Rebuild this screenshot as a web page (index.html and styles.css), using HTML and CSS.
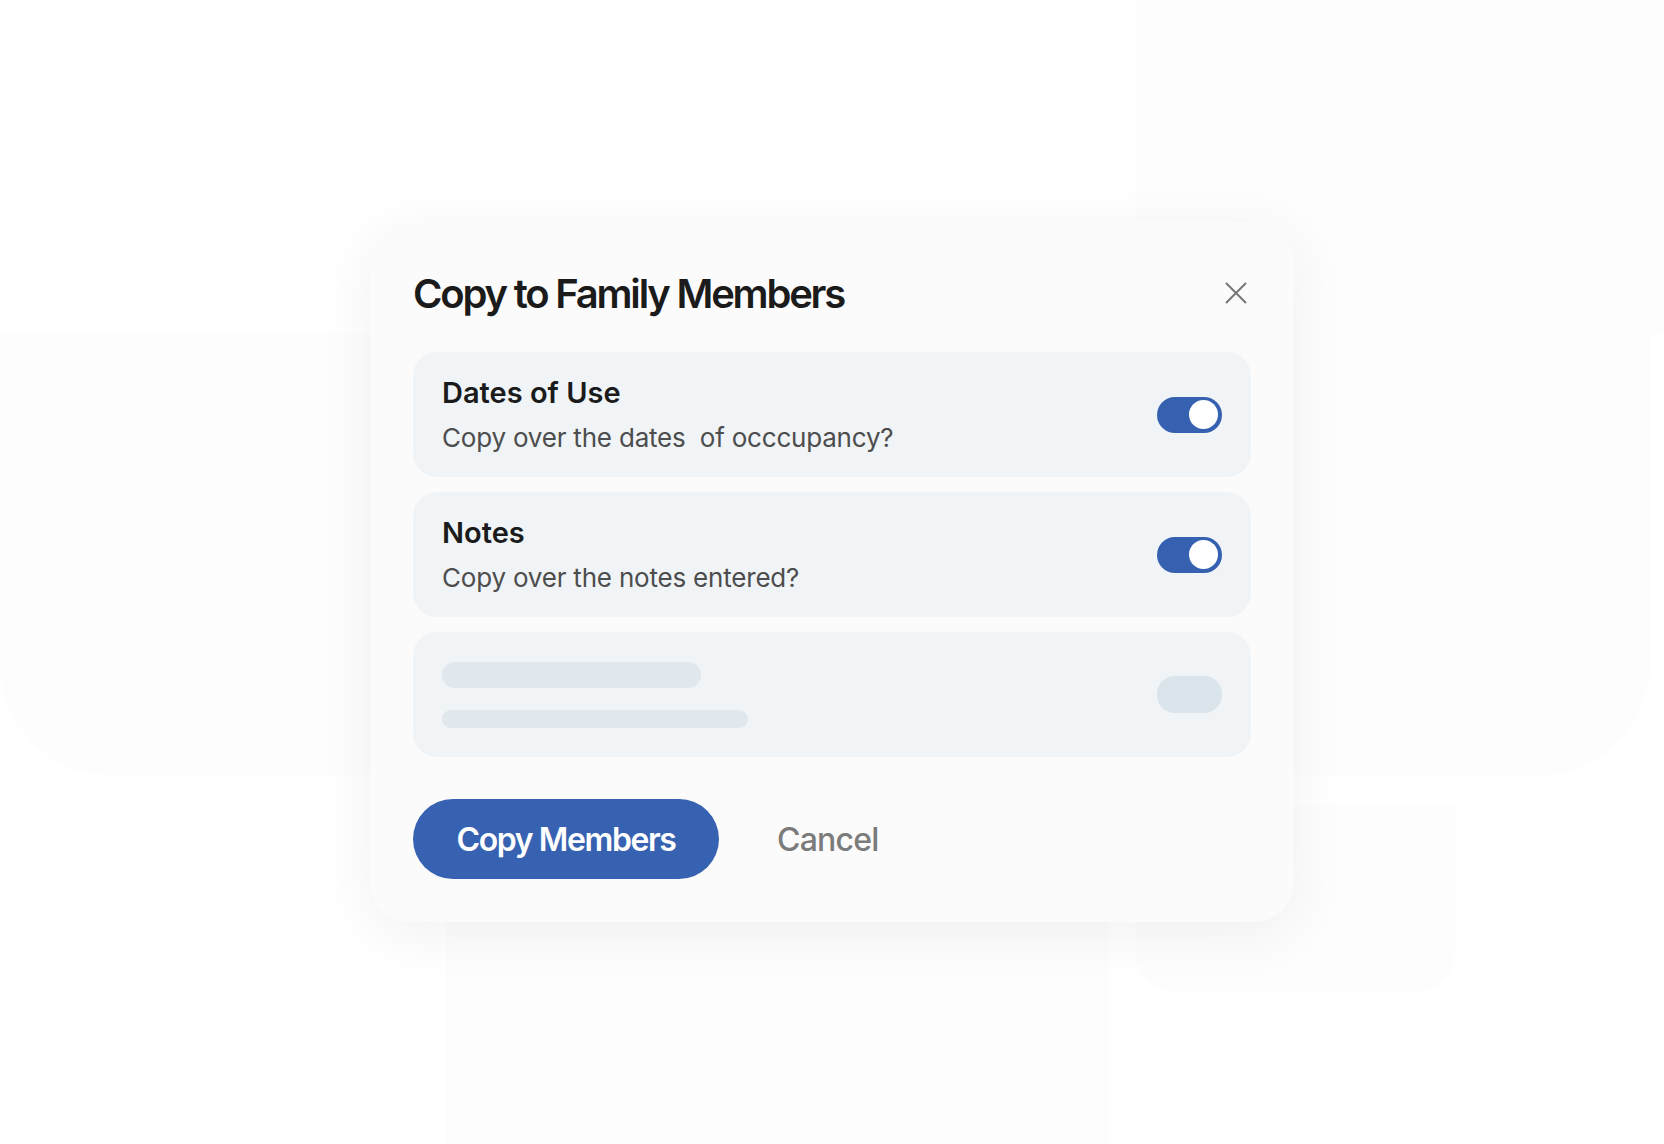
FILE: index.html
```html
<!DOCTYPE html>
<html lang="en">
<head>
    <meta charset="UTF-8">
    <meta name="viewport" content="width=device-width, initial-scale=1.0">
    <title>Copy to Family Members</title>
    <link rel="stylesheet" href="styles.css">
</head>
<body>

    <!-- faint panels of the page behind the dialog -->
    <div class="backdrop">
        <div class="panel panel-wide"></div>
        <div class="panel panel-top-right"></div>
        <div class="panel panel-bottom"></div>
        <div class="panel panel-bottom-right"></div>
    </div>

    <div class="modal" role="dialog" aria-labelledby="modal-title">
        <div class="modal-header">
            <h2 id="modal-title">Copy to Family Members</h2>
            <button class="close-btn" aria-label="Close">
                <svg width="22" height="22" viewBox="0 0 22 22">
                    <path d="M1 1 L21 21 M21 1 L1 21" stroke="#767676" stroke-width="2" fill="none"/>
                </svg>
            </button>
        </div>

        <div class="options">
            <div class="option">
                <div class="option-text">
                    <span class="option-title">Dates of Use</span>
                    <span class="option-desc">Copy over the dates&nbsp; of occcupancy?</span>
                </div>
                <span class="switch on"><span class="knob"></span></span>
            </div>

            <div class="option">
                <div class="option-text">
                    <span class="option-title">Notes</span>
                    <span class="option-desc">Copy over the notes entered?</span>
                </div>
                <span class="switch on"><span class="knob"></span></span>
            </div>

            <!-- placeholder while more options load -->
            <div class="option option-loading">
                <div class="option-text">
                    <span class="line line-title"></span>
                    <span class="line line-desc"></span>
                </div>
                <span class="switch ghost"></span>
            </div>
        </div>

        <div class="modal-actions">
            <button class="btn-primary">Copy Members</button>
            <button class="btn-link">Cancel</button>
        </div>
    </div>

</body>
</html>
```

FILE: styles.css
```css
html, body {
    height: 100%;
}
body {
    margin: 0;
    font-family: Inter, "Noto Sans", sans-serif;
    background-color: #fff;
    display: flex;
    justify-content: center;
    align-items: center;
    position: relative;
    overflow: hidden;
}

/* background panels */
.backdrop .panel {
    position: absolute;
    background-color: #fdfdfd;
}
.panel-wide {
    left: 0;
    top: 334px;
    width: 1650px;
    height: 441px;
    border-radius: 0 0 110px 110px;
    background-color: #fcfcfc;
}
.panel-top-right {
    left: 1135px;
    top: 0;
    width: 529px;
    height: 334px;
}
.panel-bottom {
    left: 446px;
    top: 900px;
    width: 663px;
    height: 244px;
}
.panel-bottom-right {
    left: 1135px;
    top: 806px;
    width: 320px;
    height: 186px;
    border-radius: 0 0 40px 40px;
}

.modal {
    position: relative;
    width: 924px;
    box-sizing: border-box;
    padding: 43px 43px 43px;
    background-color: #fbfbfb;
    border-radius: 40px;
    box-shadow: 0 12px 60px rgba(0, 0, 0, 0.06);
}

.modal-header {
    display: flex;
    justify-content: space-between;
    align-items: center;
    height: 56px;
    margin-bottom: 31px;
}
.modal-header h2 {
    margin: 0;
    font-size: 40px;
    font-weight: 600;
    letter-spacing: -2.2px;
    color: #1b1b1b;
}
.close-btn {
    width: 30px;
    height: 30px;
    padding: 0;
    border: none;
    background: none;
    display: flex;
    justify-content: center;
    align-items: center;
    cursor: pointer;
}

.options {
    display: flex;
    flex-direction: column;
    gap: 15px;
}
.option {
    height: 125px;
    box-sizing: border-box;
    padding: 0 29px;
    background-color: #f0f4f7;
    border-radius: 24px;
    display: flex;
    justify-content: space-between;
    align-items: center;
}
.option-text {
    display: flex;
    flex-direction: column;
    gap: 10px;
}
.option-title {
    font-size: 29px;
    line-height: 36px;
    font-weight: 600;
    letter-spacing: 0;
    color: #1b1b1b;
}
.option-desc {
    font-size: 26px;
    line-height: 34px;
    color: #4d4d4d;
    letter-spacing: -0.2px;
}

/* toggle */
.switch {
    position: relative;
    width: 65px;
    height: 36px;
    border-radius: 18px;
    background-color: #3561b0;
    flex-shrink: 0;
}
.switch .knob {
    position: absolute;
    top: 3.5px;
    right: 4px;
    width: 29px;
    height: 29px;
    border-radius: 50%;
    background-color: #fff;
}
.switch.ghost {
    height: 37px;
    background-color: #d9e4eb;
}

/* loading placeholder */
.option-loading .option-text {
    gap: 22px;
}
.line {
    display: block;
    background-color: #e0e7ed;
    border-radius: 13px;
}
.line-title {
    width: 259px;
    height: 26px;
}
.line-desc {
    width: 306px;
    height: 18px;
    border-radius: 9px;
}

.modal-actions {
    display: flex;
    align-items: center;
    margin-top: 42px;
}
.btn-primary {
    width: 306px;
    height: 80px;
    border: none;
    border-radius: 40px;
    background-color: #3662b1;
    color: #fff;
    font-family: inherit;
    font-size: 32px;
    font-weight: 600;
    letter-spacing: -1.4px;
    cursor: pointer;
}
.btn-link {
    margin-left: 58px;
    padding: 0;
    border: none;
    background: none;
    color: #7b7b7b;
    font-family: inherit;
    font-size: 32px;
    font-weight: 500;
    letter-spacing: -0.8px;
    cursor: pointer;
}
```
